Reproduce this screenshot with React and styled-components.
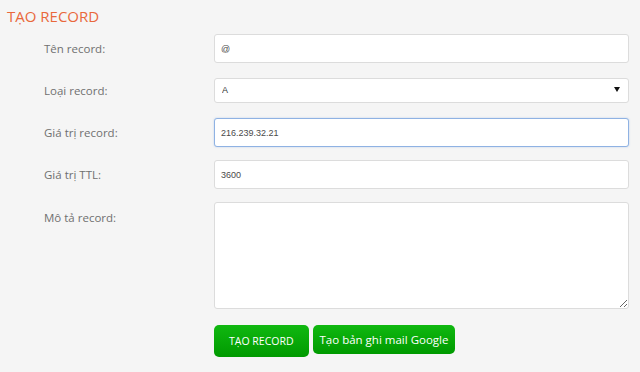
import React from "react";
import styled, { createGlobalStyle } from "styled-components";

const GlobalStyle = createGlobalStyle`
    html, body {
        margin: 0;
        padding: 0;
        background: #f5f5f5;
    }
    body {
        font-family: "Open Sans", "Liberation Sans", sans-serif;
    }
`;

const Page = styled.div`
    width: 640px;
    height: 372px;
    padding: 6px 0 0 7px;
    box-sizing: border-box;
    background: #f5f5f5;
`;

const Title = styled.h2`
    margin: 0 0 8px;
    font-size: 15px;
    font-weight: 400;
    line-height: 20px;
    color: #e9683b;
`;

const Form = styled.form`
    display: flex;
    flex-direction: column;
    padding-left: 37px;
`;

const Row = styled.div`
    display: grid;
    grid-template-columns: 170px 415px;
    align-items: start;
    min-height: 42px;
    margin-bottom: ${(p) => p.$gap || 0}px;
`;

const Label = styled.label`
    padding-top: ${(p) => p.$top || 7}px;
    font-size: 11.5px;
    line-height: 16px;
    color: #707070;
`;

const Input = styled.input`
    box-sizing: border-box;
    width: 415px;
    height: 29px;
    padding: 0 6px;
    border: 1px solid ${(p) => (p.$focus ? "#8fb2e3" : "#dcdcdc")};
    border-radius: 3px;
    background: #fff;
    font-family: "Liberation Sans", Arial, sans-serif;
    font-size: 9px;
    color: #4a4a4a;
    outline: none;
    box-shadow: ${(p) => (p.$focus ? "0 0 2px rgba(102, 150, 220, 0.4)" : "none")};
`;

const SelectWrap = styled.div`
    position: relative;
    width: 415px;

    &::after {
        content: "";
        position: absolute;
        right: 9px;
        top: 11px;
        border-left: 3px solid transparent;
        border-right: 3px solid transparent;
        border-top: 5px solid #111;
        pointer-events: none;
    }
`;

const Select = styled.select`
    appearance: none;
    -webkit-appearance: none;
    box-sizing: border-box;
    width: 415px;
    height: 25px;
    padding: 0 7px;
    border: 1px solid #dcdcdc;
    border-radius: 3px;
    background: #fff;
    font-family: "Liberation Sans", Arial, sans-serif;
    font-size: 9px;
    color: #333;
    outline: none;
`;

const TextArea = styled.textarea`
    box-sizing: border-box;
    width: 415px;
    height: 107px;
    padding: 6px;
    border: 1px solid #dcdcdc;
    border-radius: 3px;
    background: #fff;
    font-family: "Liberation Sans", Arial, sans-serif;
    font-size: 9px;
    outline: none;
    resize: vertical;
`;

const Actions = styled.div`
    display: flex;
    align-items: flex-start;
    gap: 4px;
    padding-left: 170px;
`;

const Button = styled.button`
    box-sizing: border-box;
    height: ${(p) => p.$h}px;
    padding: 0 ${(p) => p.$px}px;
    border: none;
    border-radius: 5px;
    background: linear-gradient(#10b810, #009a00);
    color: #fff;
    font-family: "Open Sans", "Liberation Sans", sans-serif;
    font-size: ${(p) => p.$size}px;
    cursor: pointer;
`;

export default function App() {
    return (
        <Page>
            <GlobalStyle />
            <Title>TẠO RECORD</Title>
            <Form onSubmit={(e) => e.preventDefault()}>
                <Row>
                    <Label>Tên record:</Label>
                    <Input defaultValue="@" />
                </Row>
                <Row>
                    <Label>Loại record:</Label>
                    <SelectWrap>
                        <Select defaultValue="A">
                            <option value="A">A</option>
                            <option value="CNAME">CNAME</option>
                            <option value="MX">MX</option>
                            <option value="TXT">TXT</option>
                        </Select>
                    </SelectWrap>
                </Row>
                <Row>
                    <Label>Giá trị record:</Label>
                    <Input $focus defaultValue="216.239.32.21" />
                </Row>
                <Row>
                    <Label>Giá trị TTL:</Label>
                    <Input defaultValue="3600" />
                </Row>
                <Row $gap={16}>
                    <Label $top={8}>Mô tả record:</Label>
                    <TextArea />
                </Row>
                <Actions>
                    <Button type="submit" $h={32} $px={15} $size={10.5}>TẠO RECORD</Button>
                    <Button type="button" $h={29} $px={7} $size={11.5}>Tạo bản ghi mail Google</Button>
                </Actions>
            </Form>
        </Page>
    );
}
